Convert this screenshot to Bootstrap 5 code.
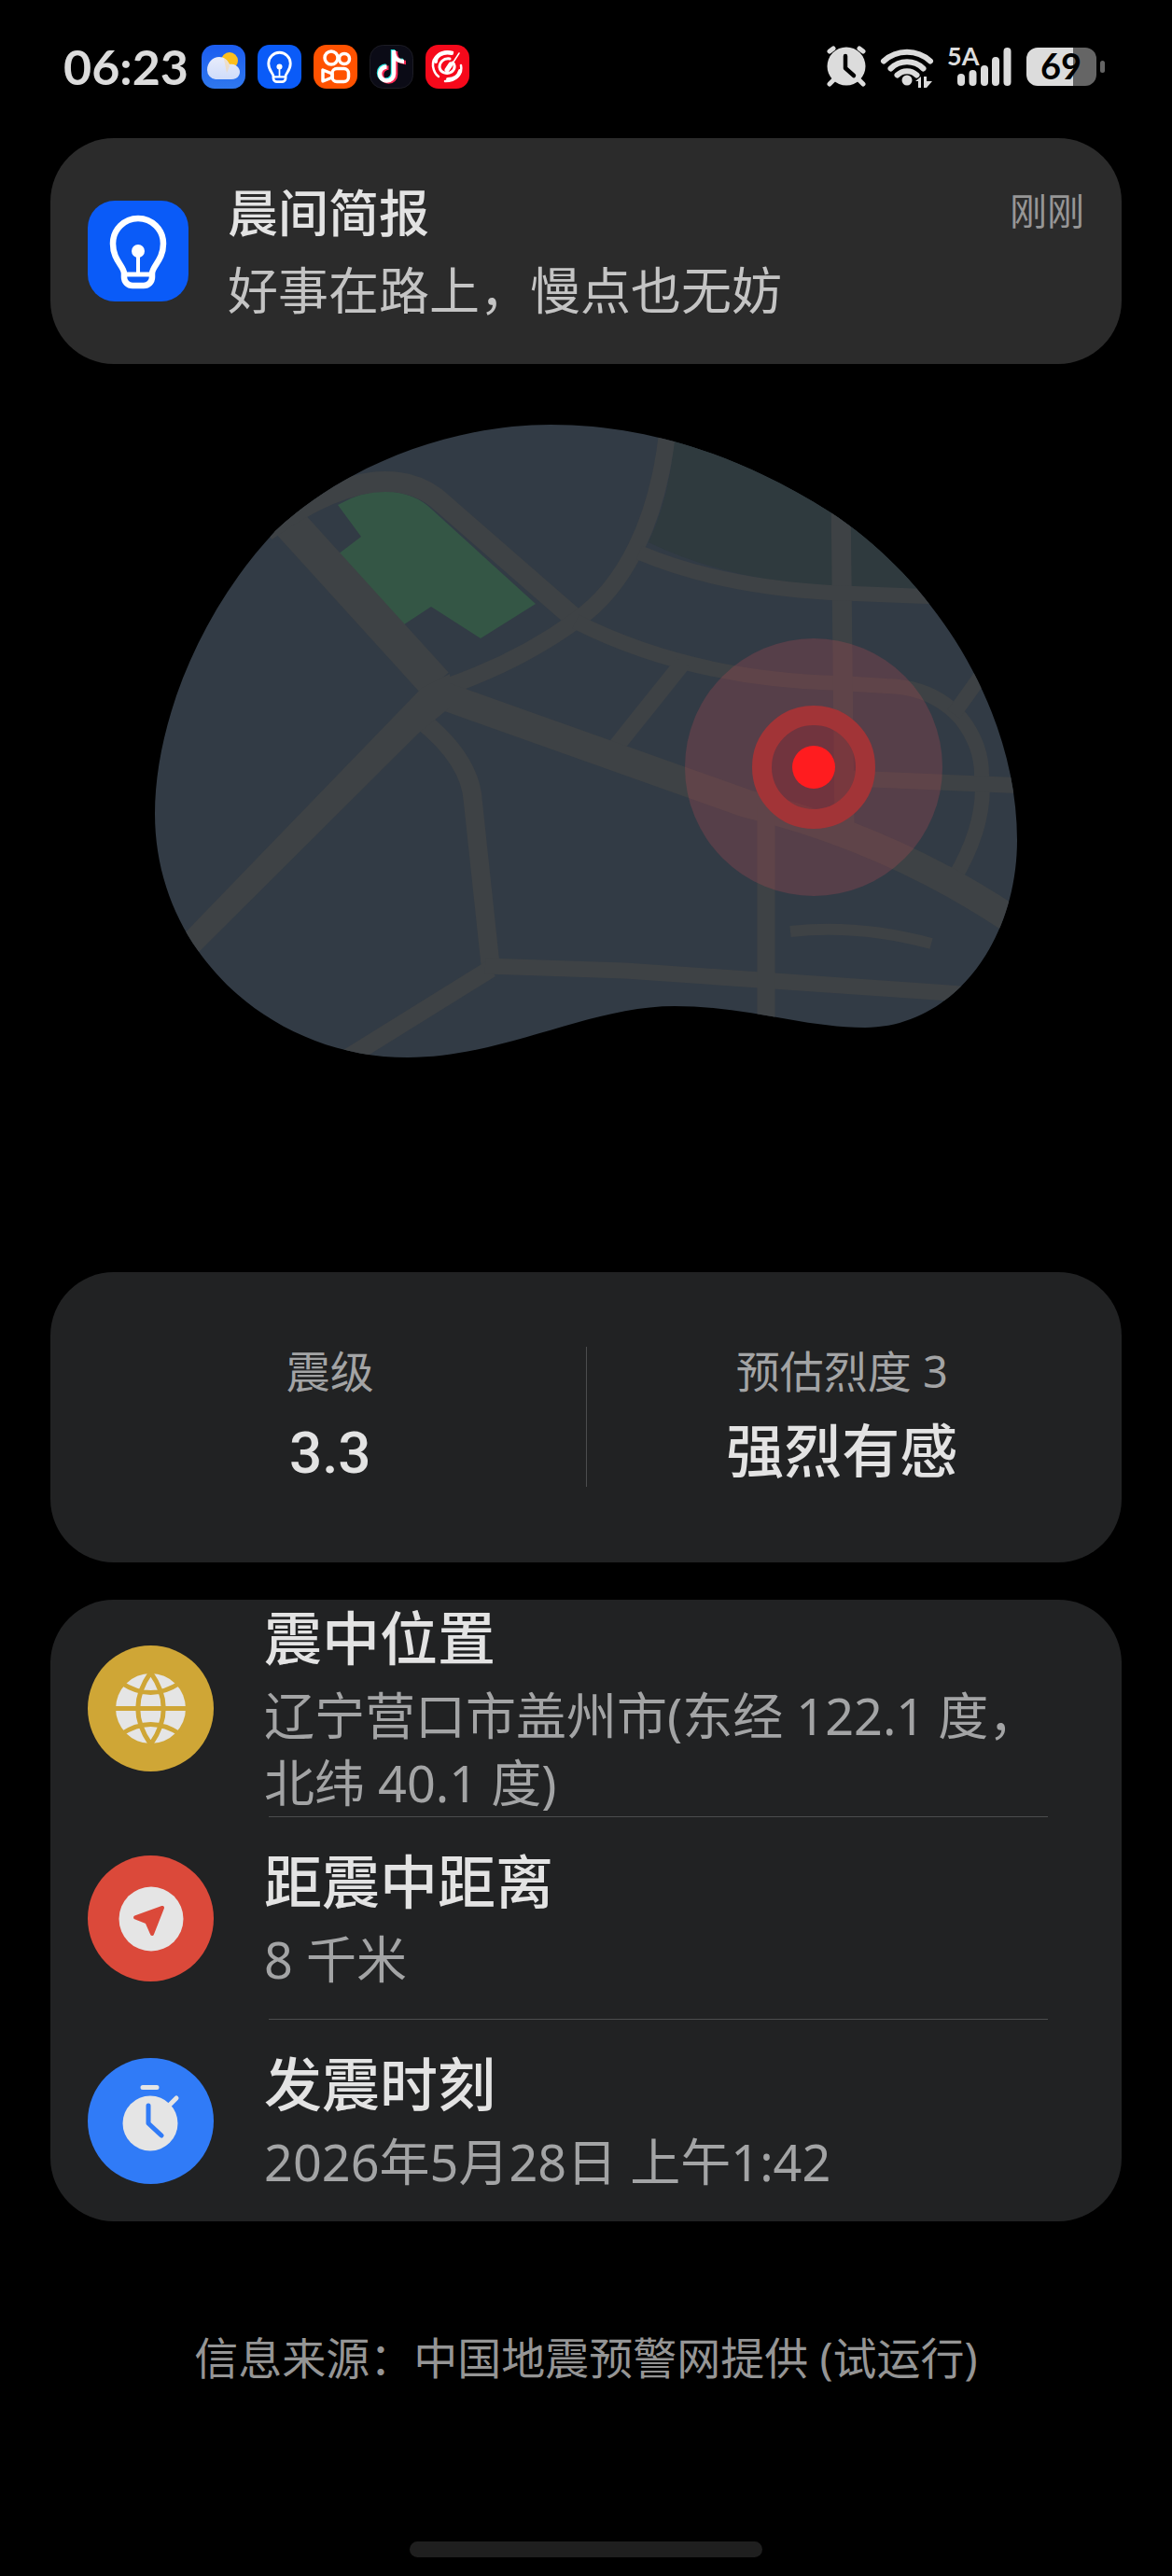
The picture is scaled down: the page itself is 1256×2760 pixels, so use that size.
<!DOCTYPE html>
<html lang="zh-CN" data-bs-theme="dark">
<head>
<meta charset="utf-8">
<meta name="viewport" content="width=device-width, initial-scale=1">
<title>地震预警</title>
<link href="https://cdn.jsdelivr.net/npm/bootstrap@5.3.0/dist/css/bootstrap.min.css" rel="stylesheet">
<style>
  body { background: #000; color: #e3e3e3; font-family: "Noto Sans", "Noto Sans CJK SC", sans-serif; }
  .status-bar { padding: 35px 72px 41px 68px; color: #dcdcdc; }
  .status-clock { font: 700 52px/48px Lato, sans-serif; margin-right: 14px; }
  .status-apps { gap: 13px; }
  .status-apps svg { width: 47px; height: 47px; }
  .page-gutter { padding-left: 54px; padding-right: 54px; }
  .panel { background: #212223; border: 0; border-radius: 68px; }
  .notice { background: #2b2b2b; border: 0; border-radius: 68px; padding: 36px 40px; gap: 42px; }
  .notice-icon { width: 108px; height: 108px; }
  .notice-title { font-size: 54px; line-height: 84px; font-family: "Noto Sans CJK SC", sans-serif; font-weight: 500; color: #e3e3e3; }
  .notice-body { font-size: 54px; line-height: 86px; color: #c4c4c4; }
  .notice-time { font-size: 40px; line-height: 84px; color: #969696; }
  .figures { padding: 62px 26px 73px; }
  .figure-rule { width: 1px; height: 150px; background: #4c4d4e; margin-top: 18px; }
  .figure-label { font-size: 47px; line-height: 88px; color: #a3a4a5; }
  .headline { font-family: Roboto, "Noto Sans CJK SC", sans-serif; font-size: 62px; line-height: 88px; color: #e3e3e3; font-weight: 500; }
  .details { margin-top: 40px; }
  .detail-row { min-height: 216px; padding: 0 75px 0 40px; gap: 54px; }
  .detail-row svg { width: 135px; height: 135px; }
  .detail-text { font-size: 54px; line-height: 72px; color: #a3a4a5; }
  .details > .detail-rule { margin: 0 79px 0 234px; height: 1px; border: 0; background: #4c4d4e; opacity: 1; }
  .source-note { font-size: 47px; line-height: 72px; margin: 110px 0 161px; color: #959595; }
  .home-bar { width: 378px; height: 17px; background: #1f1f1f; margin-bottom: 20px; }
</style>
</head>
<body>
<svg class="d-none" aria-hidden="true">
  <symbol id="bulb" viewBox="0 0 108 108">
    <rect width="108" height="108" rx="29" fill="#0a5bf8"/>
    <path d="M39 78C39 70 27 64 27 46a27 27 0 0 1 54 0C81 64 69 70 69 78v4a9 9 0 0 1-9 9H48a9 9 0 0 1-9-9z" fill="none" stroke="#fff" stroke-width="6.500"/>
    <path d="M39 79h30" stroke="#fff" stroke-width="5"/><path d="M54 56v22" stroke="#fff" stroke-width="4"/>
    <circle cx="54" cy="54" r="7" fill="#fff"/>
  </symbol>
</svg>

<header class="status-bar d-flex align-items-center justify-content-between">
  <div class="d-flex align-items-center">
    <time class="status-clock">06:23</time>
    <div class="status-apps d-flex">
      <svg viewBox="0 0 47 47" role="img" aria-label="天气">
        <defs><linearGradient id="sky" x1="0" y1="0" x2="0" y2="1"><stop stop-color="#1b5cf0"/><stop offset="1" stop-color="#2f78ee"/></linearGradient>
        <linearGradient id="cloud" x1="0" y1="0" x2="0" y2="1"><stop stop-color="#e8ecfb"/><stop offset="1" stop-color="#cfdcfa"/></linearGradient></defs>
        <rect width="47" height="47" rx="14" fill="url(#sky)"/>
        <circle cx="30" cy="17" r="9" fill="#fcbf1e"/>
        <path d="M15 37A10 10 0 0 1 6 27c0-8 6-14 13-14 5 0 9 3 11 8 6-1 11 3 11 8s-4 8-9 8z" fill="url(#cloud)"/>
        <path d="M24 15c3 1 5 4 6 8l-3 7z" fill="#fad59b" opacity=".5"/>
      </svg>
      <svg role="img" aria-label="晨间简报"><use href="#bulb"/></svg>
      <svg viewBox="0 0 47 47" role="img" aria-label="快手">
        <rect width="47" height="47" rx="14" fill="#ff5200"/>
        <g fill="none" stroke="#fff" stroke-width="3.500"><circle cx="19" cy="14" r="7"/><circle cx="33" cy="15" r="5.500"/><rect x="20" y="25.500" width="17.500" height="14" rx="5"/><path d="M20 31l-10-4v12l10-4z" stroke-linejoin="round"/></g>
      </svg>
      <svg viewBox="0 0 47 47" role="img" aria-label="抖音">
        <rect x=".5" y=".5" width="46" height="46" rx="14" fill="#0b0b16" stroke="#1c1c24"/>
        <g fill="none" stroke-width="4.500"><path d="M26 6v25a7.500 7.500 0 1 1-7.500-7.500M26 9c1 6 5 9 11 9" stroke="#26e5e0" transform="translate(-1 -1)"/><path d="M26 6v25a7.500 7.500 0 1 1-7.500-7.500M26 9c1 6 5 9 11 9" stroke="#fb2c55" transform="translate(2 1)"/><path d="M26 6v25a7.500 7.500 0 1 1-7.500-7.500M26 9c1 6 5 9 11 9" stroke="#fff"/></g>
      </svg>
      <svg viewBox="0 0 47 47" role="img" aria-label="音乐">
        <rect width="47" height="47" rx="14" fill="#f6091b"/>
        <g fill="none" stroke="#fff" stroke-linecap="round"><path d="M29 8C16 5 7 13 8 23c1 6 3 9 6 11" stroke-width="2.500"/><path d="M28 9C18 7 11 12 11 18" stroke-width="4"/><path d="M38 22c2 9-5 17-17 17" stroke-width="2.500"/><path d="M37 28c-2 7-8 9-13 9" stroke-width="4"/><path d="M26 15c-7-1-11 4-11 9 1 6 8 8 13 5 5-4 3-9 1-10" stroke-width="3"/><path d="M36 9L25 26" stroke-width="1.500"/><path d="M27 21l-4 6" stroke-width="5"/></g>
      </svg>
    </div>
  </div>
  <svg width="298" height="72" viewBox="886 36 298 72" fill="#dcdcdc" role="img" aria-label="闹钟 Wi-Fi 5A 信号 电量 69">
    <g stroke="#dcdcdc" stroke-linecap="round" stroke-width="5" fill="none"><path d="M889 56l4-3M925 56l-4-3M893 87l-4 4M921 87l4 4"/></g>
    <circle cx="907" cy="72" r="20.500"/><path d="M906 61v13l9 8" fill="none" stroke="#000" stroke-width="4.500" stroke-linecap="round" stroke-linejoin="round"/>
    <g fill="none" stroke="#dcdcdc" stroke-width="6" stroke-linecap="round"><path d="M947 66.500a37 37 0 0 1 50 0M954.500 74.500a25 25 0 0 1 35 0M961.500 81.500a15 15 0 0 1 21 0"/></g>
    <circle cx="972" cy="87" r="5.500"/>
    <path d="M981 88l6-5v12h-3v-7zM999 88l-6 7h-3V83h3v5z"/>
    <text x="1015" y="71" font-family="Lato, sans-serif" font-weight="700" font-size="27">5A</text>
    <g stroke="#dcdcdc" stroke-width="8" stroke-linecap="round"><path d="M1030 84v5M1042.500 80v9M1055 75v14M1067 66v23M1079.500 56v33"/></g>
    <path d="M1112 52h38v41h-38a12 12 0 0 1-12-12V64a12 12 0 0 1 12-12z"/>
    <path d="M1150 52h13a12 12 0 0 1 12 12v17a12 12 0 0 1-12 12h-13z" fill="#656565"/>
    <rect x="1179" y="66" width="5" height="13" rx="2.500" fill="#656565"/>
    <text x="1137" y="86" text-anchor="middle" fill="#000" font-family="Lato, sans-serif" font-weight="700" font-size="38">69</text>
  </svg>
</header>

<main>
  <section class="page-gutter">
    <div class="notice card flex-row align-items-center">
      <svg class="notice-icon flex-shrink-0" aria-hidden="true"><use href="#bulb"/></svg>
      <div class="flex-grow-1">
        <h1 class="notice-title m-0">晨间简报</h1>
        <p class="notice-body m-0">好事在路上，慢点也无妨</p>
      </div>
      <time class="notice-time align-self-start">刚刚</time>
    </div>
  </section>

  <svg class="d-block w-100" viewBox="0 390 1256 973" role="img" aria-label="震中地图">
    <defs><clipPath id="land"><path d="M590 455C700 455 800 492 890 549C1000 620 1090 760 1090 900C1090 1010 1020 1101 927 1101C860 1101 800 1078 723 1078C630 1078 540 1133 437 1133C290 1133 166 1020 166 872C166 780 210 660 295 569C370 498 485 455 590 455z"/></clipPath></defs>
    <g clip-path="url(#land)">
      <path d="M150 440h950v710H150z" fill="#323b45"/>
      <path d="M723 440Q724 520 695 581Q780 622 890 628L1010 632V440z" fill="#2f3a3e"/>
      <path d="M362 541Q388 526 413 526Q445 528 463 546L574 647L515 684L462 650L430 671L362 594L387 575z" fill="#345645"/>
      <g fill="none" stroke="#3e4245">
        <path d="M270 516L467 733" stroke-width="37"/>
        <path d="M285 569Q360 516 413 516Q450 516 475 540L615 662" stroke-width="22"/>
        <path d="M475 737Q555 710 617 665C668 630 706 560 716 455" stroke-width="18"/>
        <path d="M617 666Q740 728 900 732L950 735Q1000 736 1030 770Q1052 798 1052 830Q1058 882 1022 942" stroke-width="16"/>
        <path d="M1060 712L1022 765" stroke-width="16"/>
        <path d="M732 710L660 800" stroke-width="18"/>
        <path d="M465 742L800 861Q960 900 1095 993" stroke-width="30"/>
        <path d="M452 772Q505 815 507 860L526 1038" stroke-width="20"/>
        <path d="M360 1141L526 1038" stroke-width="19"/>
        <path d="M520 1035L670 1040L1060 1067" stroke-width="17"/>
        <path d="M821 865V1100" stroke-width="19"/>
        <path d="M901 530L905 885" stroke-width="21"/>
        <path d="M685 592Q770 628 890 635L1020 640" stroke-width="16"/>
        <path d="M910 834L1100 842" stroke-width="17"/>
        <path d="M847 998Q920 990 998 1011" stroke-width="12"/>
      </g>
      <path d="M190 1008L452 737L482 722L482 758L448 786L205 1028z" fill="#3e4245"/>
    </g>
    <circle cx="872" cy="822" r="138" fill="#e8505c" fill-opacity=".2"/>
    <circle cx="872" cy="822" r="46" fill="#ef0812" fill-opacity=".18"/>
    <circle cx="872" cy="822" r="55.500" fill="none" stroke="#a23437" stroke-width="21"/>
    <circle cx="872" cy="822" r="23" fill="#ff1c1f"/>
  </svg>

  <section class="page-gutter">
    <div class="panel figures card flex-row text-center">
      <div class="row g-0 flex-grow-1">
        <div class="col">
          <div class="figure-label">震级</div>
          <div class="headline">3.3</div>
        </div>
        <div class="figure-rule"></div>
        <div class="col">
          <div class="figure-label">预估烈度 3</div>
          <div class="headline">强烈有感</div>
        </div>
      </div>
    </div>

    <div class="panel details card">
      <div class="detail-row d-flex align-items-center">
        <svg class="flex-shrink-0" viewBox="0 0 135 135" aria-hidden="true">
          <circle cx="67.500" cy="67.500" r="67.500" fill="#cfa636"/><circle cx="67.500" cy="67.500" r="37.500" fill="#e5e5e5"/>
          <g fill="none" stroke="#cfa636" stroke-width="5"><path d="M28 67.500h79M67.500 29Q40 67.500 67.500 106M67.500 29Q95 67.500 67.500 106M36 40Q67.500 61 99 40M36 95Q67.500 74 99 95"/></g>
        </svg>
        <div>
          <h2 class="headline m-0">震中位置</h2>
          <div class="detail-text">辽宁营口市盖州市(东经 122.1 度，北纬 40.1 度)</div>
        </div>
      </div>
      <hr class="detail-rule">
      <div class="detail-row d-flex align-items-center">
        <svg class="flex-shrink-0" viewBox="0 0 135 135" aria-hidden="true">
          <circle cx="67.500" cy="67.500" r="67.500" fill="#db493a"/><circle cx="68" cy="68" r="34.500" fill="#e5e5e5"/>
          <path d="M51 66.500L80 56L69 84L63.500 71.500z" fill="#db493a" stroke="#db493a" stroke-width="4" stroke-linejoin="round"/>
        </svg>
        <div>
          <h2 class="headline m-0">距震中距离</h2>
          <div class="detail-text">8 千米</div>
        </div>
      </div>
      <hr class="detail-rule">
      <div class="detail-row d-flex align-items-center">
        <svg class="flex-shrink-0" viewBox="0 0 135 135" aria-hidden="true">
          <circle cx="67.500" cy="67.500" r="67.500" fill="#307bf7"/><circle cx="67" cy="70" r="29.500" fill="#e5e5e5"/>
          <g fill="none" stroke-width="5" stroke-linecap="round" stroke-linejoin="round"><path d="M59 31.500h15M95 43l-9 9" stroke="#e5e5e5"/><path d="M65 51v19l14 13" stroke="#307bf7"/></g>
        </svg>
        <div>
          <h2 class="headline m-0">发震时刻</h2>
          <div class="detail-text">2026年5月28日 上午1:42</div>
        </div>
      </div>
    </div>
  </section>
</main>

<footer>
  <p class="source-note text-center">信息来源：中国地震预警网提供 (试运行)</p>
  <div class="home-bar rounded-pill mx-auto"></div>
</footer>
<script src="https://cdn.jsdelivr.net/npm/bootstrap@5.3.0/dist/js/bootstrap.bundle.min.js"></script>
</body>
</html>
